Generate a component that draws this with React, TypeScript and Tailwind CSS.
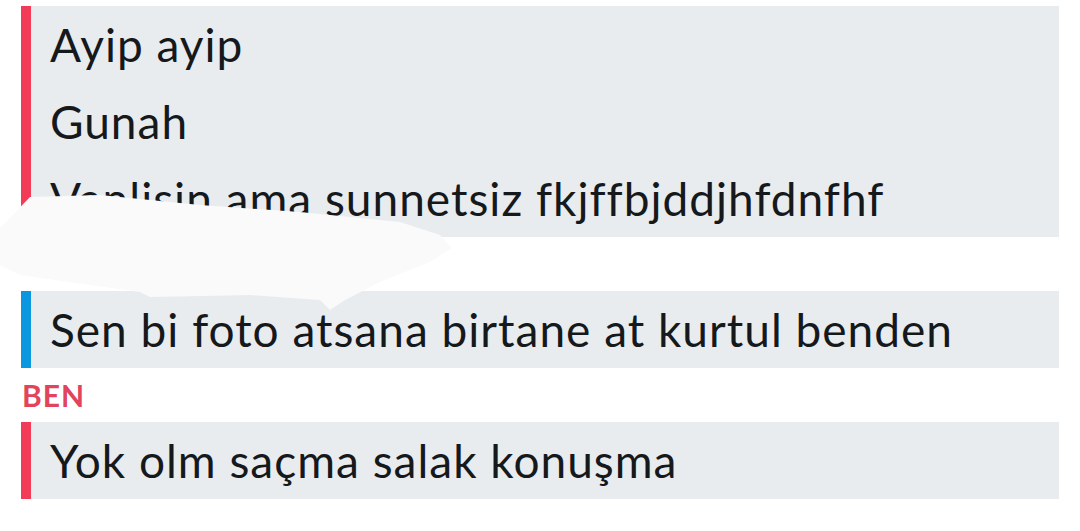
import type { ReactNode } from "react";

type Message = {
  from: "me" | "friend";
  lines: string[];
};

const font = { fontFamily: "Lato, 'Noto Sans', sans-serif" };

function Bubble({ color, children }: { color: string; children: ReactNode }) {
  return (
    <div className="flex bg-[#e9ecef]">
      <div className={`w-[10px] shrink-0 ${color}`} />
      <div className="flex flex-col pl-[19px]">{children}</div>
    </div>
  );
}

function Line({ text }: { text: string }) {
  return (
    <div className="h-[77px] whitespace-nowrap text-[46px] leading-[77px] tracking-[1px] text-[#16191c]">
      {text}
    </div>
  );
}

export default function App() {
  const mine: Message = {
    from: "me",
    lines: ["Ayip ayip", "Gunah", "Vanlisin ama sunnetsiz fkjffbjddjhfdnfhf"],
  };

  return (
    <div className="relative h-[531px] w-[1080px] overflow-hidden bg-white" style={font}>
      <div className="flex flex-col px-[21px] pt-[6px]">
        <Bubble color="bg-[#f23c57]">
          {mine.lines.map((l) => (
            <Line key={l} text={l} />
          ))}
        </Bubble>

        {/* friend name label (hidden under redaction) */}
        <div className="h-[54px]" />

        <Bubble color="bg-[#0b96e0]">
          <Line text="Sen bi foto atsana birtane at kurtul benden" />
        </Bubble>

        <div className="h-[54px] pl-[1px] text-[30px] font-bold leading-[54px] tracking-[1px] text-[#e2445c]">
          BEN
        </div>

        <Bubble color="bg-[#f23c57]">
          <Line text="Yok olm saçma salak konuşma" />
        </Bubble>
      </div>

      {/* redaction smudge */}
      <svg
        className="pointer-events-none absolute left-0 top-0"
        width="1080"
        height="531"
        viewBox="0 0 1080 531"
      >
        <polygon
          fill="#fafafa"
          points="0,228 30,197 100,195 200,205 300,212 400,222 440,235 452,248 430,262 380,282 345,300 330,310 320,300 250,295 150,297 140,292 90,285 20,275 0,265"
        />
      </svg>
    </div>
  );
}
